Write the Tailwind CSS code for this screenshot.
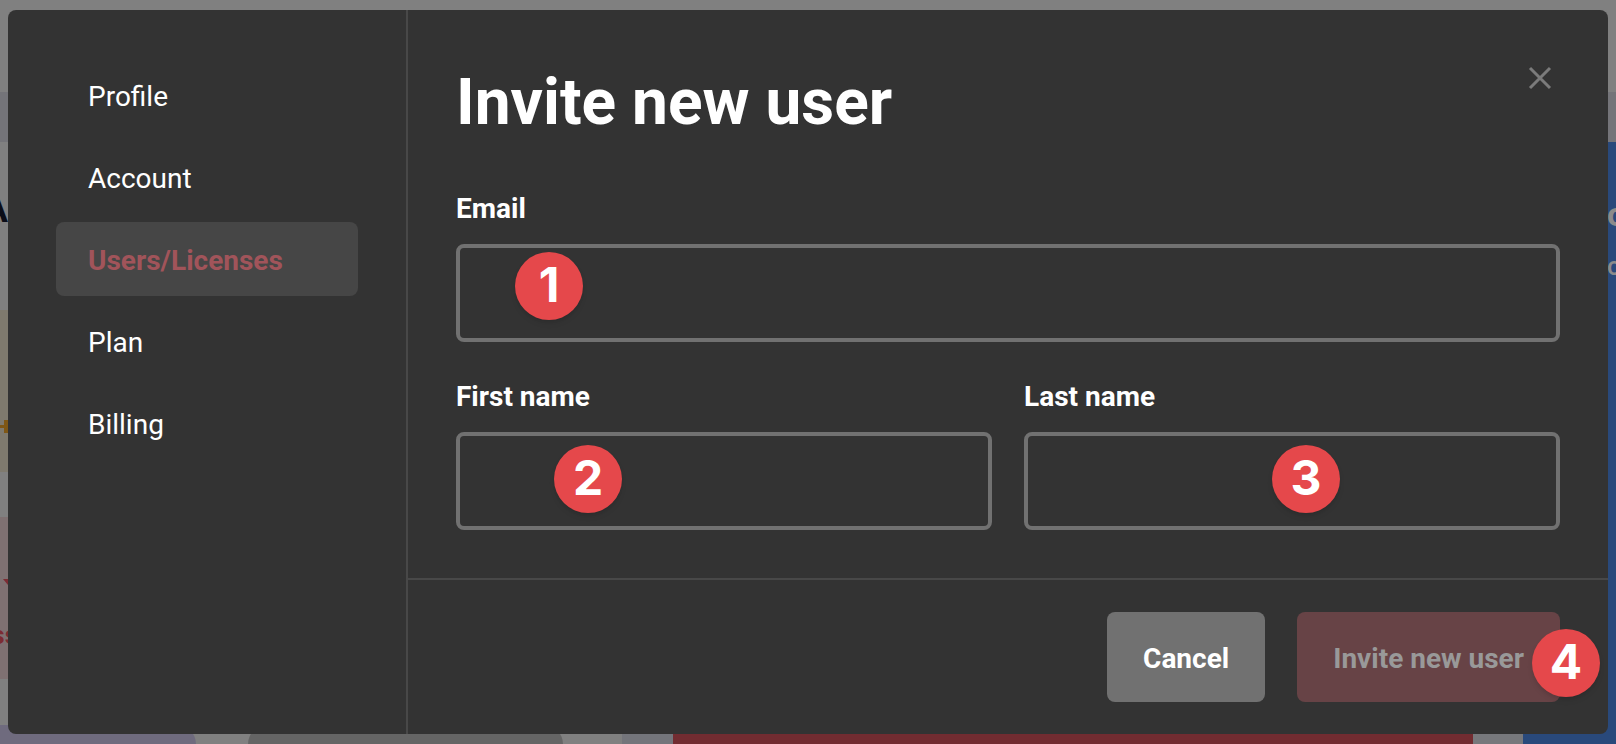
<!DOCTYPE html>
<html lang="en">
<head>
<meta charset="utf-8">
<meta name="viewport" content="width=device-width, initial-scale=1">
<title>Invite new user</title>
<script src="https://cdn.jsdelivr.net/npm/@tailwindcss/browser@4"></script>
</head>
<body class="relative min-h-screen overflow-hidden bg-[#808080] font-['Roboto','Liberation_Sans',sans-serif] text-[28px] leading-9 text-white">

  <!-- Dimmed page behind the dialog -->
  <div class="absolute inset-0 flex flex-col overflow-hidden" aria-hidden="true">
    <div class="h-[92px] shrink-0"></div>
    <div class="h-[50px] shrink-0 bg-[#747479]"></div>
    <div class="flex grow">
      <div class="flex w-[622px] shrink-0 flex-col">
        <div class="h-[168px] pt-[50px]">
          <div class="flex w-2 justify-end text-[36px] font-bold text-[#0b0d18]"><span>A</span></div>
        </div>
        <div class="h-[162px] bg-[#7f7a6e] pt-[110px]">
          <svg class="h-[14px] w-2" viewBox="0 0 8 14" fill="#7f5715"><path d="M0 5H4V0H8V13H4V8H0Z"/></svg>
        </div>
        <div class="mt-[45px] h-[162px] bg-[#7f7172] pt-[62px]">
          <svg class="block h-[6px] w-2" viewBox="0 0 8 6" fill="#7c2c33"><path d="M3 0H8V6Z"/></svg>
          <div class="mt-8 flex w-[18px] justify-end text-[26px] leading-9 font-bold text-[#7c2c33]"><span>ss</span></div>
        </div>
        <div class="mt-[46px] flex grow gap-[52px]">
          <div class="w-[196px] rounded-tr-3xl bg-[#6f6b7e]"></div>
          <div class="w-[315px] rounded-t-3xl bg-[#656565]"></div>
        </div>
      </div>
      <div class="w-[51px] shrink-0 bg-[#74757b]"></div>
      <div class="grow bg-[#722c31]"></div>
      <div class="w-[50px] shrink-0 bg-[#77787c]"></div>
      <div class="w-[93px] shrink-0 overflow-hidden bg-[#29497b] pt-[54px] pl-[84px] text-[#8b8b8b]">
        <div class="text-[34px] font-bold">o</div>
        <div class="mt-4 text-[26px] font-medium">c</div>
      </div>
    </div>
  </div>

  <!-- Dialog -->
  <div role="dialog" aria-modal="true" aria-labelledby="title" class="relative mx-2 my-[10px] flex min-h-[calc(100vh-20px)] rounded-lg bg-[#333333]">
    <nav class="flex w-[400px] shrink-0 flex-col gap-2 border-r-2 border-[#484848] p-12">
      <a href="#" class="rounded-lg px-8 pt-[21px] pb-[17px]">Profile</a>
      <a href="#" class="rounded-lg px-8 pt-[21px] pb-[17px]">Account</a>
      <a href="#" aria-current="page" class="rounded-lg bg-[#464646] px-8 pt-[21px] pb-[17px] font-bold text-[#a1545a]">Users/Licenses</a>
      <a href="#" class="rounded-lg px-8 pt-[21px] pb-[17px]">Plan</a>
      <a href="#" class="rounded-lg px-8 pt-[21px] pb-[17px]">Billing</a>
    </nav>

    <form class="flex min-w-0 grow flex-col">
      <div class="grow px-12 pt-12">
        <div class="flex items-start justify-between">
          <h1 id="title" class="pt-[5px] text-[64px] leading-[80px] font-bold">Invite new user</h1>
          <button type="button" aria-label="Close" class="flex h-10 w-10 items-center justify-center">
            <svg class="size-6" viewBox="0 0 24 24" fill="none" stroke="#7b7b7b" stroke-width="3"><path d="M2 2 22 22M22 2 2 22"/></svg>
          </button>
        </div>

        <div class="mt-12">
          <label for="email" class="block font-bold">Email</label>
          <div class="relative mt-[17px]">
            <input id="email" type="email" class="block h-[98px] w-full rounded-lg border-4 border-[#717171] bg-transparent px-8 outline-none">
            <span class="absolute top-2 left-[59px] flex size-[68px] items-center justify-center rounded-full bg-[#e5484b] pb-0.5 font-['Inter',sans-serif] text-[48px] font-bold shadow-md">1</span>
          </div>
        </div>

        <div class="mt-[37px] grid grid-cols-2 gap-8">
          <div>
            <label for="first" class="block font-bold">First name</label>
            <div class="relative mt-[17px]">
              <input id="first" type="text" class="block h-[98px] w-full rounded-lg border-4 border-[#717171] bg-transparent px-8 outline-none">
              <span class="absolute top-[13px] left-[98px] flex size-[68px] items-center justify-center rounded-full bg-[#e5484b] pb-0.5 font-['Inter',sans-serif] text-[48px] font-bold shadow-md">2</span>
            </div>
          </div>
          <div>
            <label for="last" class="block font-bold">Last name</label>
            <div class="relative mt-[17px]">
              <input id="last" type="text" class="block h-[98px] w-full rounded-lg border-4 border-[#717171] bg-transparent px-8 outline-none">
              <span class="absolute top-[13px] left-[248px] flex size-[68px] items-center justify-center rounded-full bg-[#e5484b] pb-0.5 font-['Inter',sans-serif] text-[48px] font-bold shadow-md">3</span>
            </div>
          </div>
        </div>
      </div>

      <div class="flex justify-end gap-8 border-t-2 border-[#484848] px-12 py-8">
        <button type="button" class="rounded-lg bg-[#717171] px-9 pt-[29px] pb-[25px] font-bold">Cancel</button>
        <div class="relative">
          <button type="submit" disabled class="rounded-lg bg-[#674346] px-9 pt-[29px] pb-[25px] font-bold text-[#999999]">Invite new user</button>
          <span class="absolute top-[17px] -right-10 flex size-[68px] items-center justify-center rounded-full bg-[#e5484b] pb-0.5 font-['Inter',sans-serif] text-[48px] font-bold shadow-md">4</span>
        </div>
      </div>
    </form>
  </div>
</body>
</html>
